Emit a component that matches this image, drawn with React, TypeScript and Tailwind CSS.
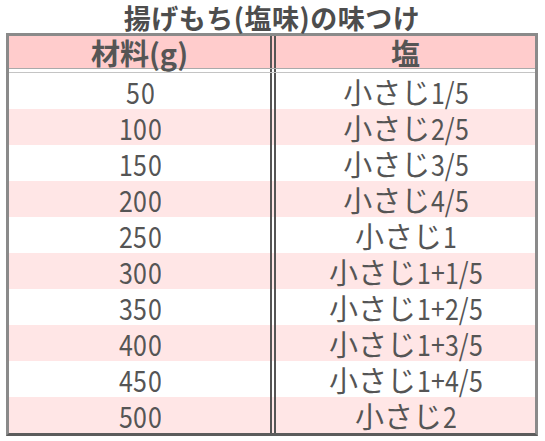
import React from "react";

const rows: [string, string][] = [
  ["50", "小さじ1/5"],
  ["100", "小さじ2/5"],
  ["150", "小さじ3/5"],
  ["200", "小さじ4/5"],
  ["250", "小さじ1"],
  ["300", "小さじ1+1/5"],
  ["350", "小さじ1+2/5"],
  ["400", "小さじ1+3/5"],
  ["450", "小さじ1+4/5"],
  ["500", "小さじ2"],
];

const font = {
  fontFamily: "'Noto Sans CJK JP', 'Noto Sans', sans-serif",
};

// digits in the picture are narrower than the kana, so squeeze each ascii glyph
const Narrow = ({ text }: { text: string }) => (
  <>
    {Array.from(text).map((ch, i) =>
      /[\x20-\x7e]/.test(ch) ? (
        <span key={i} className="inline-block scale-x-[0.86] tracking-[-2px]">
          {ch}
        </span>
      ) : (
        <span key={i}>{ch}</span>
      )
    )}
  </>
);

const App = () => {
  return (
    <div className="w-[545px] h-[441px] bg-white text-[#555]" style={font}>
      <div className="ml-[6px] w-[532px]">
        <h1 className="h-[33px] pt-[2px] flex items-center justify-center text-[27px] font-bold leading-none tracking-[0.5px] text-[#4d4d4d]">
          揚げもち(塩味)の味つけ
        </h1>

        <div className="border-[3px] border-[#8a8a8a] border-b-[#5c5c5c]">
          <div className="flex gap-[2px] h-[32px] bg-[#ffcccc] text-[29px] font-bold">
            <div className="w-[263px] border-r-2 border-[#555] flex items-center justify-center leading-none">
              材料(g)
            </div>
            <div className="flex-1 border-l-2 border-[#555] flex items-center justify-center leading-none">
              塩
            </div>
          </div>

          <div className="flex gap-[2px] h-[5px] bg-white border-t border-t-[#aaa] border-b border-b-[#c4c4c4]">
            <div className="w-[263px] border-r-2 border-[#555]" />
            <div className="flex-1 border-l-2 border-[#555]" />
          </div>

          {rows.map(([g, salt], i) => (
            <div
              key={g}
              className={`flex gap-[2px] h-[36px] text-[29px] ${
                i % 2 === 1 ? "bg-[#ffe6e6]" : "bg-white"
              }`}
            >
              <div className="w-[263px] border-r-2 border-[#555] flex items-center justify-center leading-none">
                <Narrow text={g} />
              </div>
              <div className="flex-1 border-l-2 border-[#555] flex items-center justify-center leading-none">
                <Narrow text={salt} />
              </div>
            </div>
          ))}
        </div>
      </div>
    </div>
  );
};

export default App;
